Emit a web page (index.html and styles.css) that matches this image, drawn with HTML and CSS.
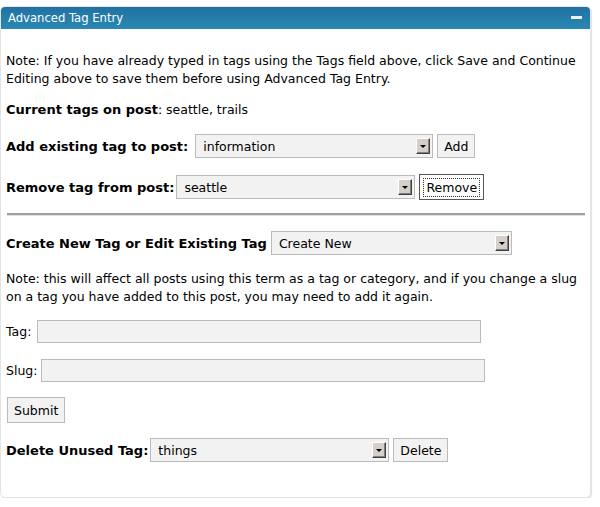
FILE: index.html
```html
<!DOCTYPE html>
<html>
<head>
<meta charset="utf-8">
<link rel="stylesheet" href="styles.css">
</head>
<body>
<div class="panel">
  <div class="panel-head">
    <span class="panel-title">Advanced Tag Entry</span>
    <span class="panel-toggle"></span>
  </div>
  <div class="panel-body">
    <p class="note note-first">Note: If you have already typed in tags using the Tags field above, click Save and Continue Editing above to save them before using Advanced Tag Entry.</p>
    <p class="current"><b>Current tags on post</b>: seattle, trails</p>

    <div class="row row-add">
      <b class="label">Add existing tag to post:</b>
      <div class="select sel-add"><span>information</span><i class="arrow"></i></div>
      <button class="btn">Add</button>
    </div>

    <div class="row row-remove">
      <b class="label">Remove tag from post:</b>
      <div class="select sel-remove"><span>seattle</span><i class="arrow"></i></div>
      <button class="btn btn-focus"><span class="focus-ring">Remove</span></button>
    </div>

    <div class="divider"></div>

    <div class="row row-create">
      <b class="label">Create New Tag or Edit Existing Tag</b>
      <div class="select sel-create"><span>Create New</span><i class="arrow"></i></div>
    </div>

    <p class="note note-second">Note: this will affect all posts using this term as a tag or category, and if you change a slug on a tag you have added to this post, you may need to add it again.</p>

    <div class="row row-tag">
      <span class="plain-label">Tag:</span>
      <div class="input input-tag"></div>
    </div>

    <div class="row row-slug">
      <span class="plain-label">Slug:</span>
      <div class="input input-slug"></div>
    </div>

    <button class="btn btn-submit">Submit</button>

    <div class="row row-delete">
      <b class="label">Delete Unused Tag:</b>
      <div class="select sel-delete"><span>things</span><i class="arrow"></i></div>
      <button class="btn">Delete</button>
    </div>
  </div>
</div>
</body>
</html>
```

FILE: styles.css
```css
html, body {
  margin: 0;
  padding: 0;
  background: #ffffff;
}
body {
  font-family: "DejaVu Sans", Verdana, sans-serif;
  font-size: 12.5px;
  color: #000;
}
.panel {
  margin: 6px 8px 0 0;
  width: 591px;
  height: 492px;
  box-sizing: border-box;
  border: 1px solid #e4e4e4;
  border-radius: 5px;
  box-shadow: 1px 1px 1px rgba(0,0,0,0.12);
  overflow: hidden;
  display: flex;
  flex-direction: column;
}
.panel-head {
  height: 22px;
  background: linear-gradient(#2072a2, #2a88b2);
  display: flex;
  align-items: center;
  justify-content: space-between;
  padding: 0 8px 0 7px;
  color: #fff;
}
.panel-title {
  font-size: 11.6px;
  line-height: 22px;
}
.panel-toggle {
  width: 11px;
  height: 3px;
  background: #e8f2f8;
  margin-top: -2px;
}
.panel-body {
  padding: 23px 0 0 5px;
}
.note {
  margin: 0;
  line-height: 18px;
  width: 578px;
}
.note-first {
  margin-bottom: 13px;
}
.current {
  margin: 0 0 15px;
  line-height: 18px;
}
.current b {
  font-size: 13px;
}
.row {
  display: flex;
  align-items: center;
  gap: 5px;
}
.label {
  font-weight: bold;
  font-size: 13px;
  margin-right: 2px;
}
.row-remove .label { margin-right: -3px; }
.row-create .label { margin-right: -1px; }
.row-delete .label { margin-right: -3px; }
.select {
  position: relative;
  height: 24px;
  box-sizing: border-box;
  border: 1px solid #bbbbbb;
  background: #f2f2f2;
  display: flex;
  align-items: center;
  padding-left: 7px;
}
.arrow {
  position: absolute;
  right: 2px;
  top: 3px;
  width: 14px;
  height: 16px;
  box-sizing: border-box;
  background: #d4d0c8;
  border-top: 1px solid #ffffff;
  border-left: 1px solid #ffffff;
  border-right: 1px solid #404040;
  border-bottom: 1px solid #404040;
  box-shadow: inset -1px -1px 0 #808080;
}
.arrow::after {
  content: "";
  position: absolute;
  left: 3px;
  top: 6px;
  border-left: 3px solid transparent;
  border-right: 3px solid transparent;
  border-top: 3px solid #000;
}
.sel-add { width: 238px; }
.sel-remove { width: 239px; }
.sel-create { width: 241px; }
.sel-delete { width: 239px; }
.btn {
  font-family: "DejaVu Sans", Verdana, sans-serif;
  font-size: 12.5px;
  color: #000;
  height: 24px;
  box-sizing: border-box;
  border: 1px solid #bbbbbb;
  background: #f2f2f2;
  padding: 0 6px;
  margin: 0;
  border-radius: 0;
}
.row-add .btn,
.row-delete .btn {
  margin-left: -1px;
}
.btn-focus {
  height: 26px;
  border: 1px solid #555555;
  padding: 0 3px;
  background: #ffffff;
  margin-left: -1px;
}
.focus-ring {
  display: inline-block;
  border: 1px dotted #333;
  padding: 1px 2px;
  line-height: 15px;
}
.row-add {
  margin-bottom: 16px;
}
.row-remove {
  margin-bottom: 13px;
}
.divider {
  width: 578px;
  height: 2px;
  background: #a0a0a0;
  border-bottom: 1px solid #e0e0e0;
  margin-left: 1px;
  margin-bottom: 15px;
}
.note-second {
  margin-top: 15px;
  margin-bottom: 14px;
}
.row-tag .plain-label { margin-right: 1px; }
.row-slug .plain-label { margin-right: -1px; }
.input {
  height: 23px;
  box-sizing: border-box;
  border: 1px solid #bbbbbb;
  background: #f2f2f2;
}
.input-tag { width: 444px; }
.input-slug { width: 444px; }
.row-tag {
  margin-bottom: 16px;
}
.row-slug {
  margin-bottom: 15px;
}
.btn-submit {
  display: block;
  height: 26px;
  margin-left: 1px;
  margin-bottom: 15px;
}
```
